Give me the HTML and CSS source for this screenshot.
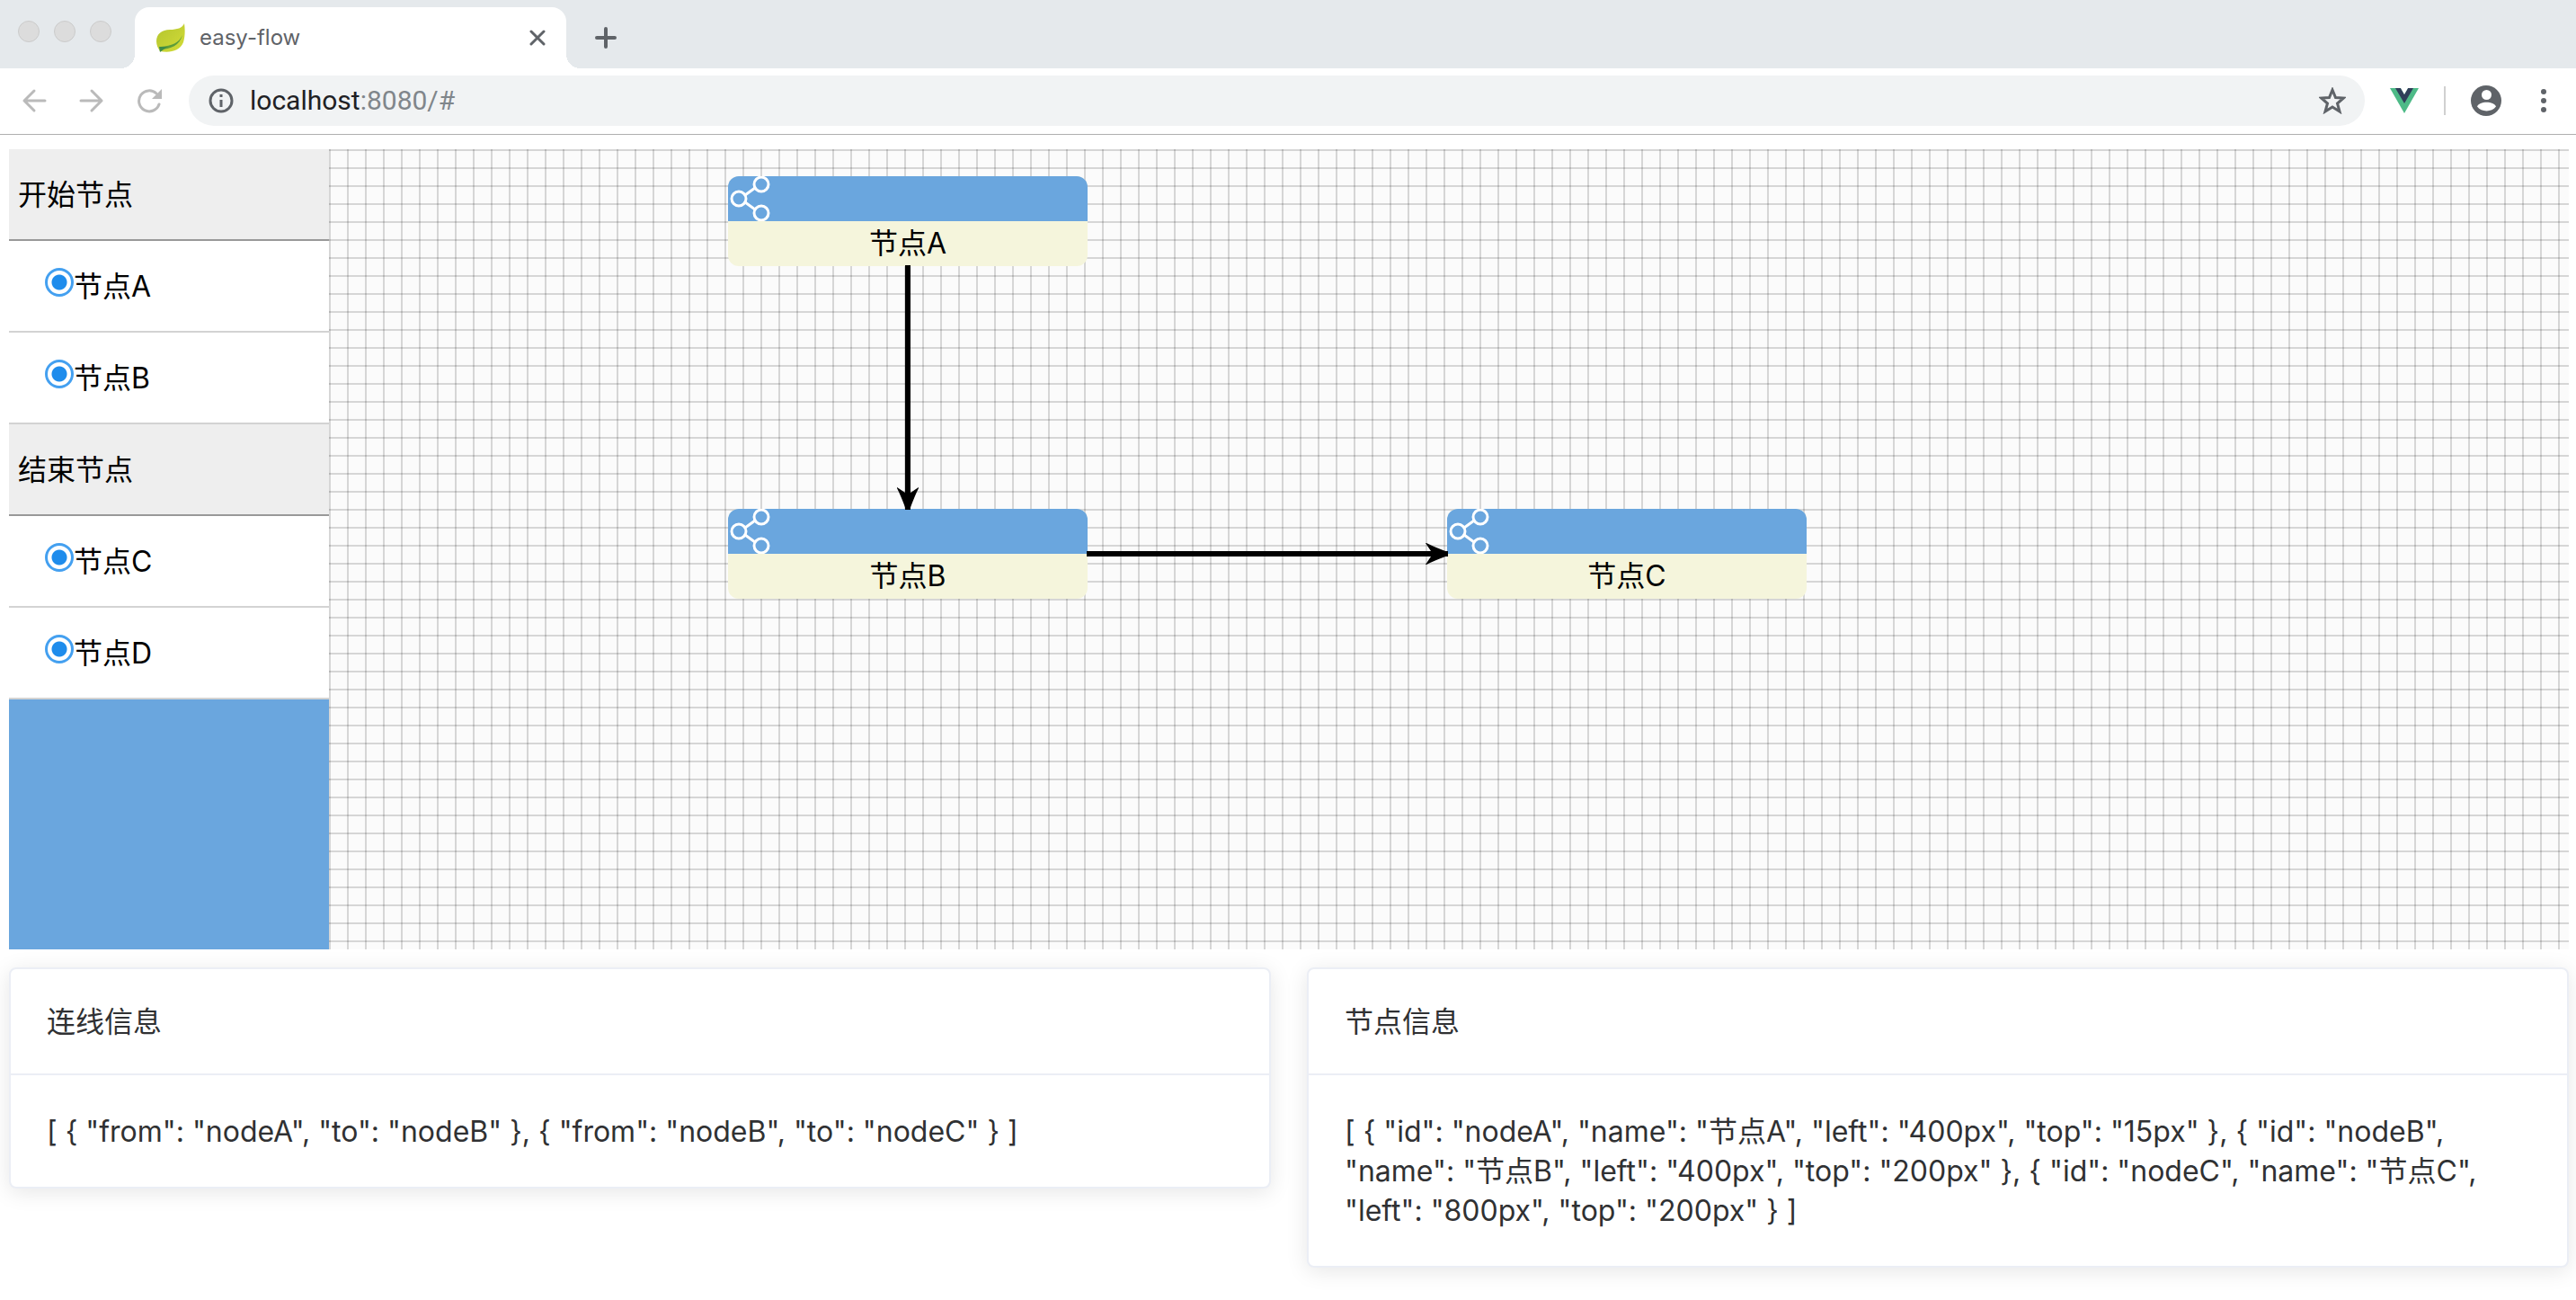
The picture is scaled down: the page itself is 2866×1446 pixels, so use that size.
FILE: index.html
```html
<!DOCTYPE html>
<html lang="zh-CN">
<head>
<meta charset="utf-8">
<title>easy-flow</title>
<link rel="stylesheet" href="styles.css">
</head>
<body>
<header class="browser">
  <div class="tab-strip">
    <div class="lights"><span class="light"></span><span class="light"></span><span class="light"></span></div>
    <div class="tab">
      <svg class="favicon" viewBox="0 0 32 32" aria-hidden="true">
        <defs><linearGradient id="leaf" x1="0" y1="0" x2="1" y2="1"><stop offset="0" stop-color="#b3c42e"/><stop offset="1" stop-color="#d3dc38"/></linearGradient></defs>
        <path d="M31 0C29 5 23 7 15 7C6 7 0 12 0 20C0 24 2 28 4 31C15 33 26 31 30 21C32 14 32 7 31 0Z" fill="url(#leaf)"/>
        <path d="M29 13C25 22 17 25 5 26L4 29C16 29 26 24 29 13Z" fill="#5d9c3a"/>
        <path d="M3 26L12 26L4 32Z" fill="#3f8b48"/>
      </svg>
      <span class="tab-title">easy-flow</span>
      <button class="icon-btn tab-close" aria-label="关闭标签页"><svg width="18" height="18" viewBox="0 0 18 18"><path d="M2 2L16 16M16 2L2 16" stroke="#5f6368" stroke-width="3" stroke-linecap="round"/></svg></button>
    </div>
    <button class="icon-btn new-tab" aria-label="新标签页"><svg width="24" height="24" viewBox="0 0 24 24"><path d="M12 2V22M2 12H22" stroke="#5f6368" stroke-width="4" stroke-linecap="round"/></svg></button>
  </div>
  <div class="toolbar">
    <div class="nav">
      <button class="icon-btn" aria-label="后退"><svg width="28" height="28" viewBox="0 0 28 28" fill="none" stroke="#bababa" stroke-width="3" stroke-linecap="round" stroke-linejoin="round"><path d="M26 14H3M14 3L3 14L14 25"/></svg></button>
      <button class="icon-btn" aria-label="前进"><svg width="28" height="28" viewBox="0 0 28 28" fill="none" stroke="#bababa" stroke-width="3" stroke-linecap="round" stroke-linejoin="round"><path d="M2 14H25M14 3L25 14L14 25"/></svg></button>
      <button class="icon-btn" aria-label="重新加载"><svg width="28" height="28" viewBox="0 0 28 28"><path d="M25 18A11.500 11.500 0 1 1 22 6" fill="none" stroke="#bababa" stroke-width="3" stroke-linecap="round"/><path d="M28 1V12H17Z" fill="#bababa"/></svg></button>
    </div>
    <div class="omnibox">
      <svg width="28" height="28" viewBox="0 0 28 28" aria-hidden="true"><circle cx="14" cy="14" r="12" fill="none" stroke="#5f6368" stroke-width="3"/><path d="M14 7V10M14 13V21" stroke="#5f6368" stroke-width="3"/></svg>
      <span class="url">localhost<span class="url-rest">:8080/#</span></span>
      <button class="icon-btn" aria-label="收藏"><svg width="30" height="30" viewBox="0 0 30 30"><path d="M15 3L18.500 11.500L27.500 12L20.500 18L23 27L15 22L7 27L9.500 18L2.500 12L11.500 11.500Z" fill="none" stroke="#5f6368" stroke-width="3"/></svg></button>
    </div>
    <div class="tools">
      <button class="icon-btn" aria-label="Vue"><svg width="32" height="28" viewBox="0 0 32 28"><path d="M0 0H32L16 28Z" fill="#4dba87"/><path d="M6 0H12L16 7L20 0H26L16 17Z" fill="#2f3e59"/><path d="M12 0H20L16 7Z" fill="#fff"/></svg></button>
      <span class="divider"></span>
      <button class="icon-btn" aria-label="用户"><svg width="34" height="34" viewBox="0 0 34 34"><circle cx="17" cy="17" r="17" fill="#5f6368"/><circle cx="17.500" cy="10.500" r="5.500" fill="#fff"/><path d="M7 23.500C9 17 26 17 28 23.500C23 30 12 30 7 23.500Z" fill="#fff"/></svg></button>
      <button class="icon-btn" aria-label="菜单"><svg width="6" height="28" viewBox="0 0 6 28" fill="#5f6368"><circle cx="3" cy="4" r="3"/><circle cx="3" cy="14" r="3"/><circle cx="3" cy="24" r="3"/></svg></button>
    </div>
  </div>
</header>

<main class="page">
  <section class="flow">
    <aside class="palette">
      <h2 class="group">开始节点</h2>
      <label class="item"><input class="radio" type="radio" name="a" checked>节点A</label>
      <label class="item"><input class="radio" type="radio" name="b" checked>节点B</label>
      <h2 class="group">结束节点</h2>
      <label class="item"><input class="radio" type="radio" name="c" checked>节点C</label>
      <label class="item"><input class="radio" type="radio" name="d" checked>节点D</label>
    </aside>
    <div class="canvas"></div>

    <div class="node node-a">
      <div class="node-head"><svg class="share" viewBox="0 0 50 50"><use href="#share"/></svg></div>
      <div class="node-name">节点A</div>
    </div>
    <div class="node node-b">
      <div class="node-head"><svg class="share" viewBox="0 0 50 50"><use href="#share"/></svg></div>
      <div class="node-name">节点B</div>
    </div>
    <div class="node node-c">
      <div class="node-head"><svg class="share" viewBox="0 0 50 50"><use href="#share"/></svg></div>
      <div class="node-name">节点C</div>
    </div>

    <svg class="links" width="1640" height="520" viewBox="0 0 1640 520" aria-hidden="true">
      <defs>
        <g id="share" fill="none" stroke="#fff" stroke-width="3"><circle cx="12" cy="25" r="8"/><circle cx="37" cy="9" r="8"/><circle cx="37" cy="41" r="8"/><path d="M19 21L30 13M19 29L30 37"/></g>
        <path id="arrow" d="M0 -2Q-14 -7 -24 -12H-25L-17 0L-25 12H-24Q-14 7 0 2Z"/>
      </defs>
      <path d="M1000 129V401M1199 450H1601" stroke="#000" stroke-width="6"/>
      <use href="#arrow" transform="translate(1000 401) rotate(90)"/>
      <use href="#arrow" transform="translate(1601 450)"/>
    </svg>
  </section>

  <section class="info">
    <article class="card">
      <h2 class="card-head">连线信息</h2>
      <p class="card-body">[ { "from": "nodeA", "to": "nodeB" }, { "from": "nodeB", "to": "nodeC" } ]</p>
    </article>
    <article class="card">
      <h2 class="card-head">节点信息</h2>
      <p class="card-body">[ { "id": "nodeA", "name": "节点A", "left": "400px", "top": "15px" }, { "id": "nodeB", "name": "节点B", "left": "400px", "top": "200px" }, { "id": "nodeC", "name": "节点C", "left": "800px", "top": "200px" } ]</p>
    </article>
  </section>
</main>
</body>
</html>
```
FILE: styles.css
```css
* { box-sizing: border-box; }

body {
  margin: 0;
  background: #fff;
  color: #000;
  font-family: Inter, "Noto Sans CJK SC", sans-serif;
  font-size: 32px;
  line-height: 44px;
}

h2, p { margin: 0; font-size: 32px; font-weight: 400; }

svg { display: block; }

.icon-btn {
  display: block;
  padding: 0;
  border: 0;
  background: none;
}

/* Browser frame */
.browser { border-bottom: 1px solid #b0b0b0; }

.tab-strip {
  display: flex;
  height: 76px;
  background: #e5e9ec;
}

.lights {
  display: flex;
  gap: 16px;
  width: 150px;
  padding: 23px 0 0 20px;
}

.light {
  width: 24px;
  height: 24px;
  border: 1px solid #cbcbcb;
  border-radius: 50%;
  background: #dcdcdc;
}

.tab {
  position: relative;
  display: flex;
  align-items: center;
  width: 480px;
  margin-top: 8px;
  padding: 0 23px 0 24px;
  border-radius: 16px 16px 0 0;
  background: #fff;
}

/* Outward curves at the foot of the active tab */
.tab::before,
.tab::after {
  content: "";
  position: absolute;
  bottom: 0;
  width: 16px;
  height: 16px;
}

.tab::before {
  left: -16px;
  background: radial-gradient(circle at 0 0, transparent 16px, #fff 16px);
}

.tab::after {
  right: -16px;
  background: radial-gradient(circle at 100% 0, transparent 16px, #fff 16px);
}

.favicon { width: 32px; height: 32px; }

.tab-title {
  flex: 1;
  margin-left: 16px;
  color: #5f6368;
  font-family: Inter, sans-serif;
  font-size: 24px;
}

.new-tab { margin: 8px 0 0 32px; }

.toolbar {
  display: flex;
  align-items: center;
  padding: 8px 33px 9px 24px;
}

.nav {
  display: flex;
  gap: 36px;
  width: 186px;
}

.omnibox {
  display: flex;
  flex: 1;
  align-items: center;
  height: 56px;
  padding: 0 21px 0 22px;
  border-radius: 28px;
  background: #f1f3f4;
}

.url {
  flex: 1;
  margin-left: 18px;
  color: #202124;
  font-family: Roboto, sans-serif;
  font-size: 30px;
}

.url-rest { color: #80868b; }

.tools {
  display: flex;
  align-items: center;
  gap: 28px;
  padding-left: 28px;
}

.divider {
  width: 2px;
  height: 32px;
  background: #d0d0d0;
}

.tools .divider + .icon-btn { margin-right: 16px; }

/* Flow designer */
.page { padding: 16px 8px 36px 10px; }

.flow {
  position: relative;
  display: flex;
  min-height: 890px;
}

.palette {
  width: 356px;
  background: #6aa6de;
}

.group,
.item {
  display: flex;
  align-items: center;
  height: 102px;
  padding-top: 2px;
  border-bottom: 2px solid #d3d3d3;
  background: #fff;
}

.group {
  padding-left: 10px;
  border-color: #999;
  background: #eee;
}

.item { padding-left: 40px; }

.radio {
  appearance: none;
  width: 32px;
  height: 32px;
  margin: 0 0 10px;
  border: 3px solid #44a0f0;
  border-radius: 50%;
  background: radial-gradient(circle, #1e8cec 8px, #fff 9px);
}

.canvas {
  flex: 1;
  background-color: #fbfbfb;
  background-image:
    linear-gradient(90deg, rgba(0, 0, 0, .15) 2px, transparent 2px),
    linear-gradient(rgba(0, 0, 0, .15) 2px, transparent 2px);
  background-size: 20px 20px;
}

.node {
  position: absolute;
  width: 400px;
  overflow: hidden;
  border-radius: 12px;
  background: #f5f5dc;
  text-align: center;
}

.node-a { left: 800px; top: 30px; }
.node-b { left: 800px; top: 400px; }
.node-c { left: 1600px; top: 400px; }

.node-head { background: #6aa6de; }

.share { width: 50px; height: 50px; }

.node-name { line-height: 50px; }

.links {
  position: absolute;
  left: 0;
  top: 0;
  pointer-events: none;
}

/* Data cards */
.info {
  display: grid;
  grid-template-columns: 1fr 1fr;
  align-items: start;
  gap: 40px;
  padding-top: 20px;
}

.card {
  border: 2px solid #ebeef5;
  border-radius: 8px;
  background: #fff;
  box-shadow: 0 4px 24px rgba(0, 0, 0, .1);
  color: #303133;
}

.card-head {
  padding: 37px 40px 35px;
  border-bottom: 2px solid #ebeef5;
}

.card-body { padding: 41px 40px 39px; }
```
